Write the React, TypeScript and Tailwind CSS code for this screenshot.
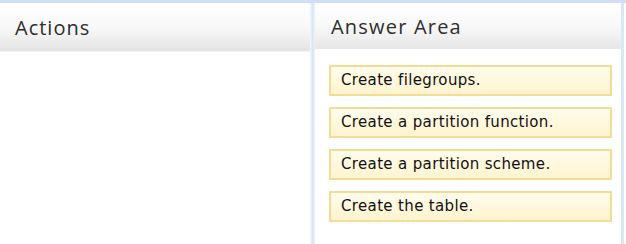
import React from "react";

const items = [
  "Create filegroups.",
  "Create a partition function.",
  "Create a partition scheme.",
  "Create the table.",
];

export default function App() {
  return (
    <div className="w-[626px] h-[244px] bg-white overflow-hidden flex flex-col" style={{ fontFamily: "'DejaVu Sans', Verdana, sans-serif" }}>
      <div className="h-[3px] bg-[#cfe0f2] shrink-0" />
      <div className="flex flex-1">
        <div className="w-[310px] flex flex-col">
          <div className="h-[47px] mt-[2px] bg-gradient-to-b from-[#ffffff] via-[#f8f8f8] to-[#e4e4e4] border-b border-[#f2f2f2] flex items-center pl-[15px]">
            <span className="text-[20px] text-[#2e2e2e] font-['Open_Sans',sans-serif] tracking-[1px]">Actions</span>
          </div>
        </div>
        <div className="w-[5px] bg-gradient-to-r from-[#f4f8fc] via-[#d8e6f4] to-[#eef4fa]" />
        <div className="flex-1 flex flex-col border-r-[3px] border-[#dbe7f3] mr-[2px]">
          <div className="h-[44px] mt-[2px] bg-gradient-to-b from-[#ffffff] via-[#f8f8f8] to-[#e6e6e6] flex items-center pl-[16px]">
            <span className="text-[20px] text-[#2e2e2e] font-['Open_Sans',sans-serif] tracking-[1.2px]">Answer Area</span>
          </div>
          <div className="flex flex-col gap-[11px] pt-[16px] pl-[14px] pr-[9px]">
            {items.map((t) => (
              <div
                key={t}
                className="h-[31px] border-[2px] border-[#f1dd95] bg-gradient-to-b from-[#fffcec] to-[#fff4cf] flex items-center pl-[10px] text-[15px] tracking-[0.35px] text-[#111]"
                style={{ fontFamily: "Verdana, 'DejaVu Sans', sans-serif" }}
              >
                {t}
              </div>
            ))}
          </div>
        </div>
      </div>
    </div>
  );
}
